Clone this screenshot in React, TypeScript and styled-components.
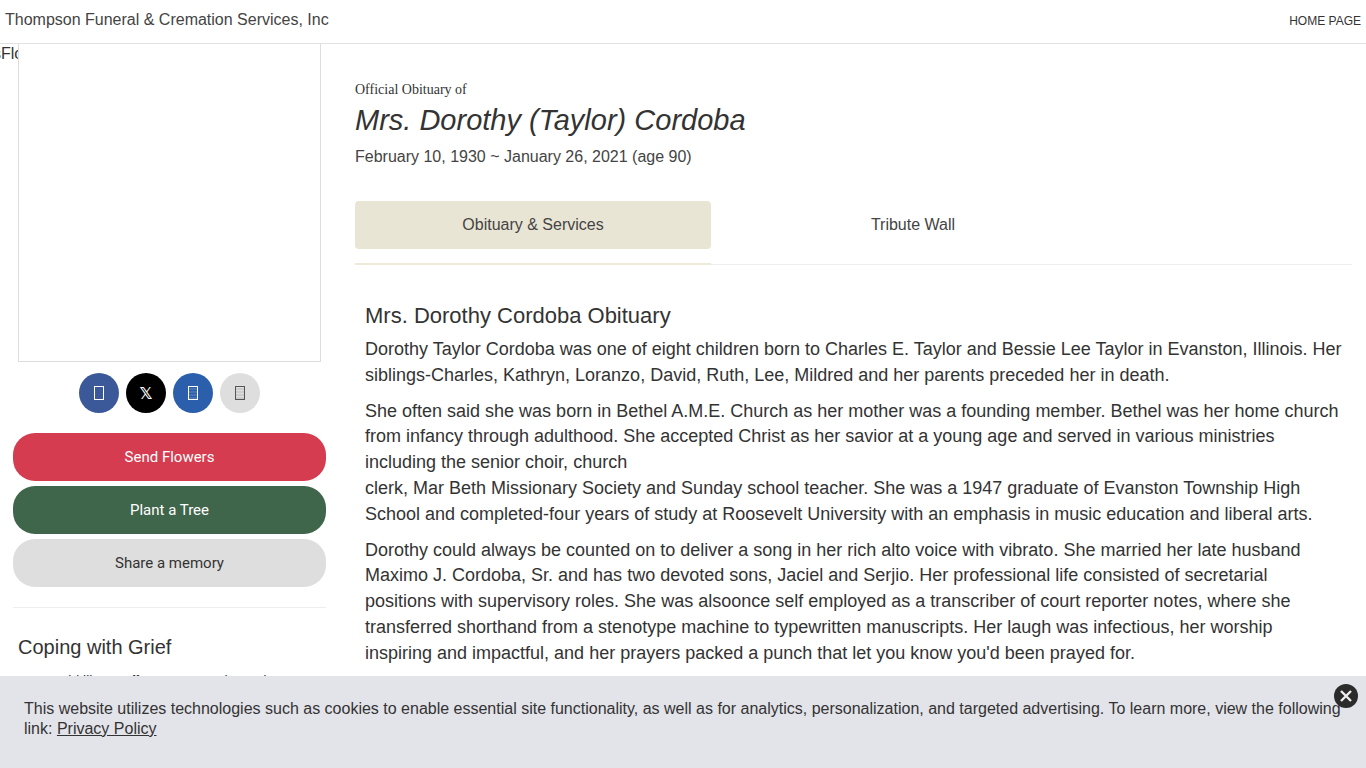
import React from "react";
import styled, { createGlobalStyle } from "styled-components";

const GlobalStyle = createGlobalStyle`
  html, body {
    margin: 0;
    height: 100%;
    overflow: hidden;
    background: #fff;
    color: #333;
    font-family: "Liberation Sans", Arial, sans-serif;
  }
  * { box-sizing: border-box; }
`;

const paragraphs = [
  [
    "Dorothy Taylor Cordoba was one of eight children born to Charles E. Taylor and Bessie Lee Taylor in Evanston, Illinois. Her siblings-Charles, Kathryn, Loranzo, David, Ruth, Lee, Mildred and her parents preceded her in death.",
  ],
  [
    "She often said she was born in Bethel A.M.E. Church as her mother was a founding member. Bethel was her home church from infancy through adulthood. She accepted Christ as her savior at a young age and served in various ministries including the senior choir, church",
    "clerk, Mar Beth Missionary Society and Sunday school teacher. She was a 1947 graduate of Evanston Township High School and completed-four years of study at Roosevelt University with an emphasis in music education and liberal arts.",
  ],
  [
    "Dorothy could always be counted on to deliver a song in her rich alto voice with vibrato. She married her late husband Maximo J. Cordoba, Sr. and has two devoted sons, Jaciel and Serjio. Her professional life consisted of secretarial positions with supervisory roles. She was alsoonce self employed as a transcriber of court reporter notes, where she transferred shorthand from a stenotype machine to typewritten manuscripts. Her laugh was infectious, her worship inspiring and impactful, and her prayers packed a punch that let you know you'd been prayed for.",
  ],
  [
    "She will be remembered by her family and friends for her generous spirit, her love of music and her faith.",
  ],
];

const Tofu = ({ color, ribs }: { color: string; ribs?: boolean }) => (
  <svg width="10" height="14" viewBox="0 0 10 14" fill="none">
    <rect x="0.5" y="0.5" width="9" height="13" stroke={color} />
    {ribs && <path d="M0 3h-0M0 3h10M0 6h10M0 9h10M0 12h10" stroke={color} strokeOpacity="0.25" />}
  </svg>
);

export default function App() {
  return (
    <Page>
      <GlobalStyle />
      <Header>
        <Brand>Thompson Funeral &amp; Cremation Services, Inc</Brand>
        <HomeLink>HOME PAGE</HomeLink>
      </Header>
      <Columns>
        <Sidebar>
          <AltText>sFlowers</AltText>
          <PhotoFrame />
          <Socials>
            <SocialButton $bg="#3b5998">
              <Tofu color="#fff" />
            </SocialButton>
            <SocialButton $bg="#000">
              <XGlyph>𝕏</XGlyph>
            </SocialButton>
            <SocialButton $bg="#2b5fac">
              <Tofu color="#fff" ribs />
            </SocialButton>
            <SocialButton $bg="#dedede">
              <Tofu color="#555" ribs />
            </SocialButton>
          </Socials>
          <Actions>
            <ActionButton $bg="#d63c50" $fg="#fff">Send Flowers</ActionButton>
            <ActionButton $bg="#3f654a" $fg="#fff">Plant a Tree</ActionButton>
            <ActionButton $bg="#dedede" $fg="#333">Share a memory</ActionButton>
          </Actions>
          <Divider />
          <SideTitle>Coping with Grief</SideTitle>
          <SideText>We would like to offer our sympathy and support as you</SideText>
        </Sidebar>
        <Main>
          <Eyebrow>Official Obituary of</Eyebrow>
          <Name>Mrs. Dorothy (Taylor) Cordoba</Name>
          <Dates>February 10, 1930 ~ January 26, 2021 (age 90)</Dates>
          <Tabs>
            <Tab $active>
              <TabLabel $active>Obituary &amp; Services</TabLabel>
            </Tab>
            <Tab>
              <TabLabel>Tribute Wall</TabLabel>
            </Tab>
          </Tabs>
          <Article>
            <ArticleTitle>Mrs. Dorothy Cordoba Obituary</ArticleTitle>
            {paragraphs.map((lines, i) => (
              <Paragraph key={i}>
                {lines.map((line, j) => (
                  <React.Fragment key={j}>
                    {j > 0 && <br />}
                    {line}
                  </React.Fragment>
                ))}
              </Paragraph>
            ))}
          </Article>
        </Main>
      </Columns>
      <CookieBanner>
        This website utilizes technologies such as cookies to enable essential site functionality, as well as for
        analytics, personalization, and targeted advertising. To learn more, view the following link:{" "}
        <PolicyLink href="#">Privacy Policy</PolicyLink>
        <CloseButton aria-label="Close">
          <svg width="24" height="24" viewBox="0 0 24 24">
            <circle cx="12" cy="12" r="12" fill="#2b2b2b" />
            <path d="M7 7l10 10M17 7L7 17" stroke="#eee" strokeWidth="2.4" />
          </svg>
        </CloseButton>
      </CookieBanner>
    </Page>
  );
}

const Page = styled.div`
  height: 768px;
  overflow: hidden;
`;

const Header = styled.header`
  display: flex;
  justify-content: space-between;
  align-items: center;
  height: 44px;
  padding: 0 5px;
  border-bottom: 1px solid #e2e2e2;
`;

const Brand = styled.div`
  font-size: 16px;
  color: #444;
  margin-top: -4px;
`;

const HomeLink = styled.a`
  font-size: 12px;
  color: #333;
  margin-top: -2px;
`;

const Columns = styled.div`
  display: grid;
  grid-template-columns: 339px 1fr;
`;

const Sidebar = styled.aside`
  position: relative;
  padding: 0 13px;
`;

const AltText = styled.span`
  position: absolute;
  top: 1px;
  left: 0;
  width: 18px;
  overflow: hidden;
  white-space: nowrap;
  text-indent: -7px;
  font-size: 16px;
  line-height: 18px;
  color: #333;
`;

const PhotoFrame = styled.div`
  width: 303px;
  height: 318px;
  margin-left: 5px;
  border: 1px solid #ddd;
  border-top: none;
`;

const Socials = styled.div`
  display: flex;
  justify-content: center;
  gap: 7px;
  margin-top: 11px;
`;

const SocialButton = styled.div<{ $bg: string }>`
  display: flex;
  align-items: center;
  justify-content: center;
  width: 40px;
  height: 40px;
  border-radius: 50%;
  background: ${(p) => p.$bg};
`;

const XGlyph = styled.span`
  font-family: "DejaVu Sans", sans-serif;
  font-size: 16px;
  font-weight: 700;
  color: #fff;
`;

const Actions = styled.div`
  display: flex;
  flex-direction: column;
  gap: 5px;
  margin-top: 20px;
`;

const ActionButton = styled.div<{ $bg: string; $fg: string }>`
  display: flex;
  align-items: center;
  justify-content: center;
  height: 48px;
  border-radius: 22px;
  background: ${(p) => p.$bg};
  color: ${(p) => p.$fg};
  font-family: Roboto, sans-serif;
  font-size: 15px;
`;

const Divider = styled.hr`
  margin: 20px 0 0;
  border: none;
  border-top: 1px solid #eee;
`;

const SideTitle = styled.h3`
  margin: 27px 0 0 5px;
  font-size: 20px;
  line-height: 24px;
  font-weight: 400;
  color: #333;
`;

const SideText = styled.p`
  margin: 12px 0 0 5px;
  font-size: 14px;
  line-height: 20px;
  white-space: nowrap;
  color: #333;
`;

const Main = styled.main`
  padding: 37px 14px 0 16px;
`;

const Eyebrow = styled.div`
  font-family: "Liberation Serif", serif;
  font-size: 14px;
  line-height: 18px;
  color: #333;
`;

const Name = styled.h1`
  margin: 4px 0 0;
  font-size: 29px;
  line-height: 34px;
  font-style: italic;
  font-weight: 400;
  color: #333;
`;

const Dates = styled.div`
  margin-top: 10px;
  font-size: 16px;
  line-height: 20px;
  color: #444;
`;

const Tabs = styled.div`
  display: grid;
  grid-template-columns: 356px 404px;
  margin-top: 34px;
  border-bottom: 1px solid #eee;
`;

const Tab = styled.div<{ $active?: boolean }>`
  height: 64px;
  margin-bottom: -1px;
  border-bottom: ${(p) => (p.$active ? "2px solid #eee9d9" : "none")};
`;

const TabLabel = styled.div<{ $active?: boolean }>`
  display: flex;
  align-items: center;
  justify-content: center;
  height: 48px;
  border-radius: 4px;
  background: ${(p) => (p.$active ? "#e9e5d5" : "transparent")};
  font-size: 16px;
  color: #444;
`;

const Article = styled.article`
  padding: 38px 10px 0;
`;

const ArticleTitle = styled.h2`
  margin: 0 0 8px;
  font-size: 22px;
  line-height: 26px;
  font-weight: 400;
  color: #333;
`;

const Paragraph = styled.p`
  margin: 0 0 10px;
  font-size: 18px;
  line-height: 25.8px;
  color: #333;
`;

const CookieBanner = styled.div`
  position: fixed;
  left: 0;
  right: 0;
  bottom: 0;
  height: 92px;
  padding: 23px 24px 0;
  background: #e3e3ea;
  font-size: 16px;
  line-height: 20px;
  color: #333;
`;

const PolicyLink = styled.a`
  color: #333;
  text-decoration: underline;
`;

const CloseButton = styled.button`
  position: absolute;
  top: 8px;
  right: 8px;
  width: 24px;
  height: 24px;
  padding: 0;
  border: none;
  background: none;
`;
